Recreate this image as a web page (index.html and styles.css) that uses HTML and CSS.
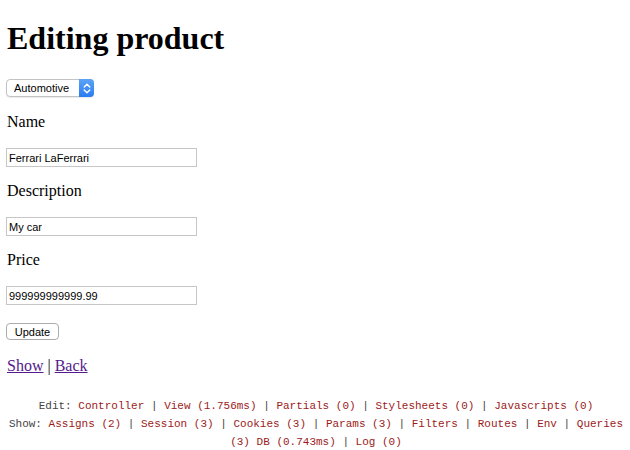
FILE: index.html
```html
<!DOCTYPE html>
<html>
<head>
<meta charset="utf-8">
<title>Editing product</title>
<link rel="stylesheet" href="styles.css">
</head>
<body>
<h1 class="title">Editing product</h1>
<form class="product-form">
  <div class="picker">
    <select class="picker-select">
      <option>Automotive</option>
    </select>
    <span class="picker-arrows">
      <svg width="8" height="11" viewBox="0 0 8 11"><path d="M1.2 4 L4 1.2 L6.8 4 M1.2 7 L4 9.8 L6.8 7" fill="none" stroke="#fff" stroke-width="1.4" stroke-linecap="round" stroke-linejoin="round"/></svg>
    </span>
  </div>
  <div class="field">
    <label class="field-label">Name</label>
    <input class="field-input" type="text" value="Ferrari LaFerrari">
  </div>
  <div class="field">
    <label class="field-label">Description</label>
    <input class="field-input" type="text" value="My car">
  </div>
  <div class="field">
    <label class="field-label">Price</label>
    <input class="field-input" type="text" value="999999999999.99">
  </div>
  <div class="actions">
    <button class="submit" type="button">Update</button>
  </div>
</form>
<div class="nav-links"><a class="nav-link" href="#">Show</a> | <a class="nav-link" href="#">Back</a></div>
<div class="footnotes">
  <div class="footnotes-line">Edit: <a class="fn-link" href="#">Controller</a> | <a class="fn-link" href="#">View (1.756ms)</a> | <a class="fn-link" href="#">Partials (0)</a> | <a class="fn-link" href="#">Stylesheets (0)</a> | <a class="fn-link" href="#">Javascripts (0)</a></div>
  <div class="footnotes-line">Show: <a class="fn-link" href="#">Assigns (2)</a> | <a class="fn-link" href="#">Session (3)</a> | <a class="fn-link" href="#">Cookies (3)</a> | <a class="fn-link" href="#">Params (3)</a> | <a class="fn-link" href="#">Filters</a> | <a class="fn-link" href="#">Routes</a> | <a class="fn-link" href="#">Env</a> | <a class="fn-link" href="#">Queries</a> <a class="fn-link" href="#">(3) DB (0.743ms)</a> | <a class="fn-link" href="#">Log (0)</a></div>
</div>
</body>
</html>
```
FILE: styles.css
```css
html, body {
  background: #fff;
}
body {
  margin: 0;
  padding: 20px 6px 0;
  font-family: "Liberation Serif", "Times New Roman", serif;
  font-size: 16px;
  color: #000;
}
.title {
  font-size: 32px;
  line-height: 37px;
  font-weight: bold;
  margin: 0 0 22px 1px;
}
.product-form {
  margin: 0;
}
.picker {
  position: relative;
  width: 88px;
  height: 18px;
  margin-bottom: 16px;
}
.picker-select {
  -webkit-appearance: none;
  appearance: none;
  display: block;
  box-sizing: border-box;
  width: 88px;
  height: 18px;
  margin: 0;
  padding: 0 0 0 7px;
  border: 1px solid #c3c3c3;
  border-radius: 4px;
  background: #fff;
  font-family: "Liberation Sans", Arial, sans-serif;
  font-size: 11px;
  color: #000;
  box-shadow: 0 1px 1px rgba(0,0,0,0.08);
}
.picker-arrows {
  position: absolute;
  top: 0;
  right: 0;
  width: 15px;
  height: 18px;
  box-sizing: border-box;
  border-radius: 0 4px 4px 0;
  background: linear-gradient(#5da3f7, #2a7cf0);
  display: flex;
  align-items: center;
  justify-content: center;
}
.field {
  margin-top: 15px;
}
.field-label {
  display: block;
  line-height: 18px;
  margin: 0 0 17px 1px;
}
.field-input {
  display: block;
  box-sizing: border-box;
  width: 191px;
  height: 19px;
  margin: 0;
  padding: 0 2px;
  border: 1px solid #c6c6c6;
  font-family: "Liberation Sans", Arial, sans-serif;
  font-size: 11px;
  color: #000;
  background: #fff;
  outline: none;
}
.actions {
  margin-top: 18px;
}
.submit {
  display: block;
  box-sizing: border-box;
  width: 53px;
  height: 17px;
  margin: 0;
  padding: 0;
  border: 1px solid #acacac;
  border-radius: 4px;
  background: #fff;
  font-family: "Liberation Sans", Arial, sans-serif;
  font-size: 11px;
  color: #000;
}
.nav-links {
  margin: 17px 0 0 1px;
  line-height: 18px;
}
.nav-link {
  color: #551a8b;
  text-decoration: underline;
}
.footnotes {
  margin: 22px 0 0 2px;
  font-family: "Liberation Mono", "Courier New", monospace;
  font-size: 11px;
  line-height: 18px;
  text-align: center;
  color: #444;
}
.fn-link {
  color: #9b1b1b;
  text-decoration: none;
}
```
